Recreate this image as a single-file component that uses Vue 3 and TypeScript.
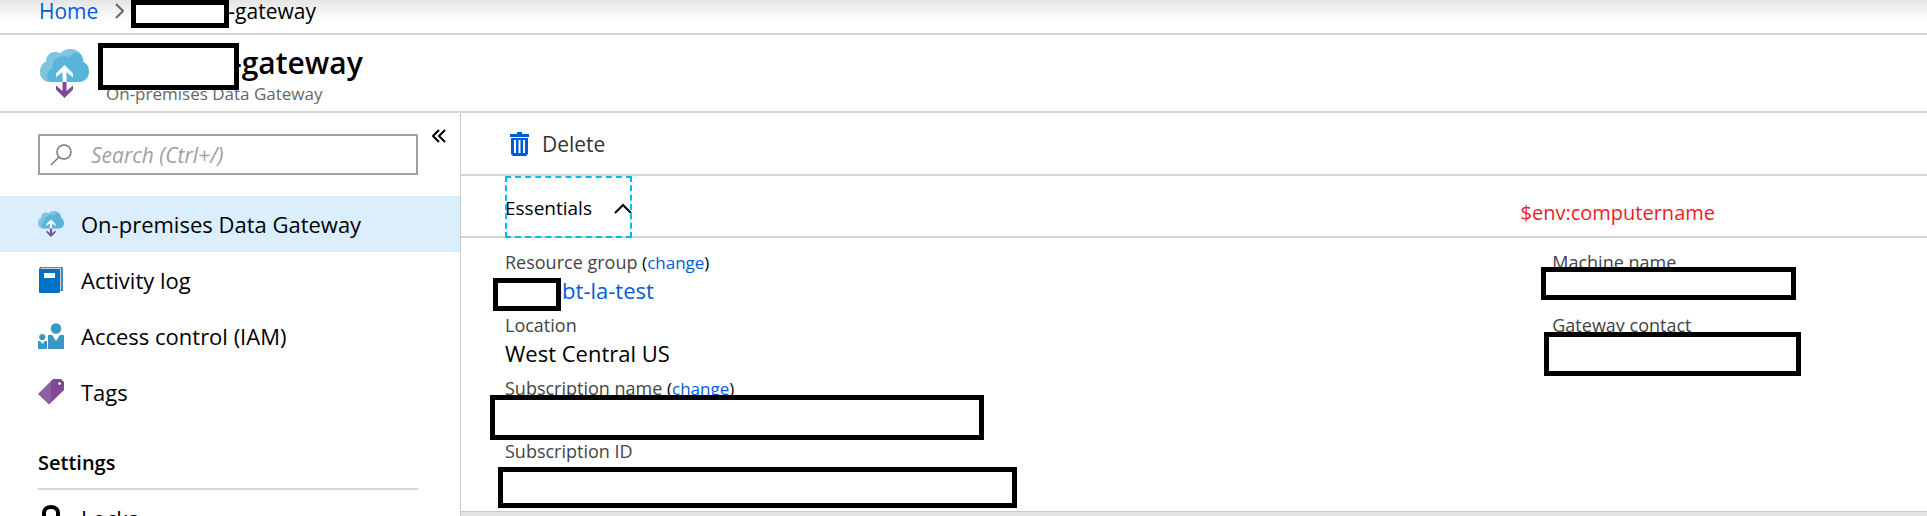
<script setup lang="ts">
import { ref } from 'vue'

interface NavItem {
  id: string
  label: string
}

interface Field {
  id: string
  label: string
  change?: boolean
  value?: string
  link?: boolean
  mask?: string
}

const search = ref('')
const expanded = ref(true)
const active = ref('gateway')

const items: NavItem[] = [
  { id: 'gateway', label: 'On-premises Data Gateway' },
  { id: 'log', label: 'Activity log' },
  { id: 'iam', label: 'Access control (IAM)' },
  { id: 'tags', label: 'Tags' },
]

const columns: Field[][] = [
  [
    { id: 'group', label: 'Resource group', change: true, value: '-bt-la-test', link: true, mask: 'mask-group' },
    { id: 'location', label: 'Location', value: 'West Central US' },
    { id: 'subscription', label: 'Subscription name', change: true, mask: 'mask-subscription' },
    { id: 'subscription-id', label: 'Subscription ID', mask: 'mask-subscription-id' },
  ],
  [
    { id: 'machine', label: 'Machine name', mask: 'mask-machine' },
    { id: 'contact', label: 'Gateway contact', mask: 'mask-contact' },
  ],
]
</script>

<template>
  <div class="page">
    <svg class="defs" width="0" height="0" aria-hidden="true">
      <symbol id="cloud" viewBox="0 0 49 49">
        <path fill="#59b4d9" d="M10 33C4 33 0 28.500 0 23c0-5 2.500-9 6-10.500C6 7 10 3 15 3c2 0 4 .5 5.500 1.500C23 1.500 26.500 0 30.500 0 38 0 43.500 6 43.500 13c3.500 1.500 5.500 5 5.500 9.500C49 28.500 45 33 39 33z" />
        <path fill="#fff" opacity=".22" d="M10 33C4 33 0 28.500 0 23c0-5 2.500-9 6-10.500C6 7 10 3 15 3c2 0 4 .5 5.500 1.500C23 1.500 26.500 0 30.500 0c4 0 7.500 1.500 9.700 4C36 3 31.500 5 29 8.500 26 7 21 6.500 17.500 9 14 11 12 14 12.500 18.500 7 22 5.500 27.500 10 33z" />
        <path fill="#fff" d="M22.500 33V23L16 28.500V24.500L24.500 16 33 24.500V28.500L26.500 23V33z" />
        <path fill="#804998" d="M22.500 33h4v9l6.500-5.500v4L24.500 49 16 40.500v-4L22.500 42z" />
      </symbol>
    </svg>

    <nav class="crumbs" aria-label="Breadcrumb">
      <a href="#home">Home</a>
      <svg class="crumb-arrow" viewBox="0 0 9 16" aria-hidden="true"><path d="M1 1l7 7-7 7" /></svg>
      <span class="crumb-current"><span class="gap"><span class="mask"></span></span>-gateway</span>
    </nav>

    <header class="head">
      <svg class="head-icon" aria-hidden="true"><use href="#cloud" /></svg>
      <div class="head-text">
        <h1><span class="gap"></span>-gateway</h1>
        <p>On-premises Data Gateway</p>
        <span class="mask mask-title"></span>
      </div>
    </header>

    <div class="body">
      <aside class="side">
        <div class="search-row">
          <label class="search">
            <svg viewBox="0 0 22 22" aria-hidden="true"><circle cx="14" cy="8" r="7" /><path d="M9 13l-8 8" /></svg>
            <input v-model="search" type="text" placeholder="Search (Ctrl+/)" aria-label="Search" />
          </label>
          <button class="collapse" type="button" aria-label="Collapse menu">
            <svg viewBox="0 0 14 14" aria-hidden="true"><path d="M7 1L1 7l6 6M13 1L7 7l6 6" /></svg>
          </button>
        </div>
        <ul class="menu">
          <li v-for="item in items" :key="item.id">
            <a :href="'#' + item.id" :class="{ active: active === item.id }" @click.prevent="active = item.id">
              <svg v-if="item.id === 'gateway'" class="icon" aria-hidden="true"><use href="#cloud" /></svg>
              <svg v-else-if="item.id === 'log'" class="icon" viewBox="0 0 26 26" aria-hidden="true">
                <path fill="#3e8ccc" d="M2 0h23v24h-3V3H2z" />
                <path fill="#d8cfc7" d="M3 1h20v22h-1V2H3z" />
                <path fill="#0072c6" d="M1 1l2 1h19v23a1 1 0 0 1-1 1H2a1 1 0 0 1-1-1z" />
                <path fill="#fff" d="M6 6h11v5H6z" />
              </svg>
              <svg v-else-if="item.id === 'iam'" class="icon" viewBox="0 0 26 26" aria-hidden="true">
                <g fill="#3999c6">
                  <circle cx="18" cy="5.500" r="5.300" />
                  <path d="M10 12h4l4 6 4-6h4v14H10z" />
                  <circle cx="4.300" cy="14" r="3.100" />
                  <path d="M0 18h2l2.500 3L7 18h2v8H0z" />
                </g>
              </svg>
              <svg v-else class="icon" viewBox="0 0 26 26" aria-hidden="true">
                <path fill="#804998" d="M15 0h8l3 3v8L11 25.500 0 15z" />
                <path fill="#fff" opacity=".12" d="M15 0L0 15l10.500 10L13 23V2z" />
                <circle cx="21.500" cy="4.500" r="2" fill="#fff" stroke="#4f2b60" />
              </svg>
              {{ item.label }}
            </a>
          </li>
        </ul>
        <h2>Settings</h2>
        <ul class="menu">
          <li>
            <a href="#locks">
              <svg class="icon" viewBox="0 0 26 26" aria-hidden="true">
                <path fill="none" stroke="#000" stroke-width="4" d="M6 12V8c0-4 3-6 7-6s7 2 7 6v4" />
                <path d="M3 12h20v14H3z" />
              </svg>
              Locks
            </a>
          </li>
        </ul>
      </aside>

      <main class="main">
        <div class="toolbar">
          <button class="delete" type="button">
            <svg viewBox="0 0 19 24" aria-hidden="true">
              <path fill="#015cda" d="M7 0h5v2h7v3H0V2h7zM1 6h17v16l-2 2H3l-2-2z" />
              <path fill="#fff" d="M4 8h2v13H4zM8.500 8h2v13h-2zM13 8h2v13h-2z" />
            </svg>
            Delete
          </button>
        </div>

        <div class="essentials-bar">
          <button class="essentials" type="button" :aria-expanded="expanded" @click="expanded = !expanded">
            Essentials
            <svg viewBox="0 0 18 11" aria-hidden="true"><path d="M1 10l8-8 8 8" /></svg>
          </button>
          <span class="note">$env:computername</span>
        </div>

        <section v-if="expanded" class="fields">
          <dl v-for="(fields, index) in columns" :key="index">
            <div v-for="field in fields" :key="field.id" class="field">
              <dt>
                {{ field.label }}
                <span v-if="field.change" class="change">(<a :href="'#change-' + field.id">change</a>)</span>
              </dt>
              <dd>
                <a v-if="field.link" href="#group"><span class="gap"></span>{{ field.value }}</a>
                <template v-else>{{ field.value }}</template>
                <span v-if="field.mask" class="mask" :class="field.mask"></span>
              </dd>
            </div>
          </dl>
        </section>
        <div class="rest"></div>
      </main>
    </div>
  </div>
</template>

<style>
body {
  margin: 0;
}
</style>

<style scoped>
.page {
  display: flex;
  flex-direction: column;
  height: 100vh;
  overflow: hidden;
  background: #fff;
  color: #000;
  font-family: 'Open Sans', 'Noto Sans', sans-serif;
  font-size: 21px;
}
* {
  box-sizing: border-box;
}
.defs {
  position: absolute;
}
a {
  color: #015cda;
  text-decoration: none;
}
button {
  display: flex;
  align-items: center;
  padding: 0;
  border: 0;
  background: none;
  color: inherit;
  font: inherit;
}
.gap {
  display: inline-block;
}
.mask {
  position: absolute;
  border: 5px solid #000;
  background: #fff;
}

.crumbs {
  display: flex;
  flex: none;
  align-items: flex-start;
  height: 35px;
  padding-left: 39px;
  border-bottom: 2px solid #d5d5d5;
  background: linear-gradient(#e4e4e4, #fff 20px);
  line-height: 22px;
}
.crumb-arrow {
  width: 9px;
  height: 16px;
  margin: 3px 7px 0 17px;
  fill: none;
  stroke: #666;
  stroke-width: 2;
}
.crumb-current {
  position: relative;
}
.crumb-current .gap {
  width: 97px;
}
.crumb-current .mask {
  top: 0;
  left: 0;
  width: 98px;
  height: 28px;
}

.head {
  display: flex;
  flex: none;
  height: 78px;
  padding: 11px 0 0 40px;
  border-bottom: 2px solid #d5d5d5;
}
.head-icon {
  width: 49px;
  height: 49px;
  margin: 3px 17px 0 0;
}
.head-text {
  position: relative;
}
h1 {
  margin: 0;
  font-size: 30px;
  font-weight: 600;
  line-height: 34px;
}
h1 .gap {
  width: 126px;
}
.head-text p {
  margin: 3px 0 0;
  color: #666;
  font-size: 17px;
  line-height: 22px;
}
.mask-title {
  top: -3px;
  left: -8px;
  width: 141px;
  height: 47px;
}

.body {
  display: flex;
  flex: 1;
  min-height: 0;
}
.side {
  flex: none;
  width: 461px;
  border-right: 1px solid #c8c8c8;
}
.search-row {
  display: flex;
  align-items: flex-start;
  padding: 21px 14px 21px 38px;
}
.search {
  display: flex;
  flex: 1;
  align-items: center;
  height: 41px;
  padding-left: 10px;
  border: 2px solid #a0a0a0;
}
.search svg {
  flex: none;
  width: 22px;
  height: 22px;
  margin-right: 19px;
  fill: none;
  stroke: #777;
  stroke-width: 1.500;
}
.search input {
  flex: 1;
  min-width: 0;
  padding: 0;
  border: 0;
  outline: 0;
  background: none;
  font: inherit;
}
.search input::placeholder {
  color: #a0a0a0;
  font-style: italic;
  opacity: 1;
}
.collapse {
  margin: -5px 0 0 14px;
}
.collapse svg {
  width: 14px;
  height: 14px;
  fill: none;
  stroke: #000;
  stroke-width: 2;
}
.menu {
  margin: 0;
  padding: 0;
  list-style: none;
}
.menu a {
  display: flex;
  gap: 17px;
  align-items: center;
  height: 56px;
  padding-left: 38px;
  color: #000;
  font-size: 22px;
}
.menu a.active {
  background: #dbeefe;
}
.icon {
  flex: none;
  width: 26px;
  height: 26px;
}
h2 {
  margin: 28px 42px 0 38px;
  padding-bottom: 10px;
  border-bottom: 2px solid #d5d5d5;
  font-size: 20px;
  font-weight: 600;
  line-height: 30px;
}

.main {
  display: flex;
  flex: 1;
  flex-direction: column;
  min-width: 0;
}
.toolbar {
  display: flex;
  flex: none;
  height: 63px;
  padding-left: 49px;
  border-bottom: 2px solid #d5d5d5;
}
.delete {
  gap: 13px;
  color: #333;
}
.delete svg {
  width: 19px;
  height: 24px;
}
.essentials-bar {
  display: flex;
  flex: none;
  align-items: flex-start;
  justify-content: space-between;
  height: 62px;
  padding: 0 212px 0 44px;
  border-bottom: 2px solid #d5d5d5;
}
.essentials {
  gap: 22px;
  height: 62px;
  padding-top: 2px;
  outline: 2px dashed #00bcf2;
  outline-offset: -2px;
  font-size: 19px;
}
.essentials svg {
  width: 18px;
  height: 11px;
  fill: none;
  stroke: #000;
  stroke-width: 2;
}
.note {
  padding-top: 22px;
  color: #ed1c24;
  font-size: 20px;
  line-height: 30px;
}

.fields {
  display: grid;
  flex: none;
  grid-template-columns: 76fr 24fr;
  padding: 11px 44px 10px;
}
dl {
  margin: 0;
}
.field {
  margin-bottom: 7px;
  line-height: 26px;
}
dt {
  height: 28px;
  color: #444;
  font-size: 18px;
}
.change {
  color: #000;
  font-size: 17px;
}
dd {
  position: relative;
  height: 28px;
  margin: 0;
  font-size: 22px;
}
dd .gap {
  width: 50px;
}
.mask-group {
  top: 1px;
  left: -12px;
  width: 68px;
  height: 33px;
}
.mask-subscription {
  top: -8px;
  left: -15px;
  width: 494px;
  height: 45px;
}
.mask-subscription-id {
  top: 1px;
  left: -7px;
  width: 519px;
  height: 41px;
}
.mask-machine {
  top: -10px;
  left: -11px;
  width: 255px;
  height: 33px;
}
.mask-contact {
  top: -8px;
  left: -8px;
  width: 257px;
  height: 44px;
}
.rest {
  flex: 1;
  border-top: 1px solid #c8c8c8;
  background: #e3e3e3;
}
</style>
